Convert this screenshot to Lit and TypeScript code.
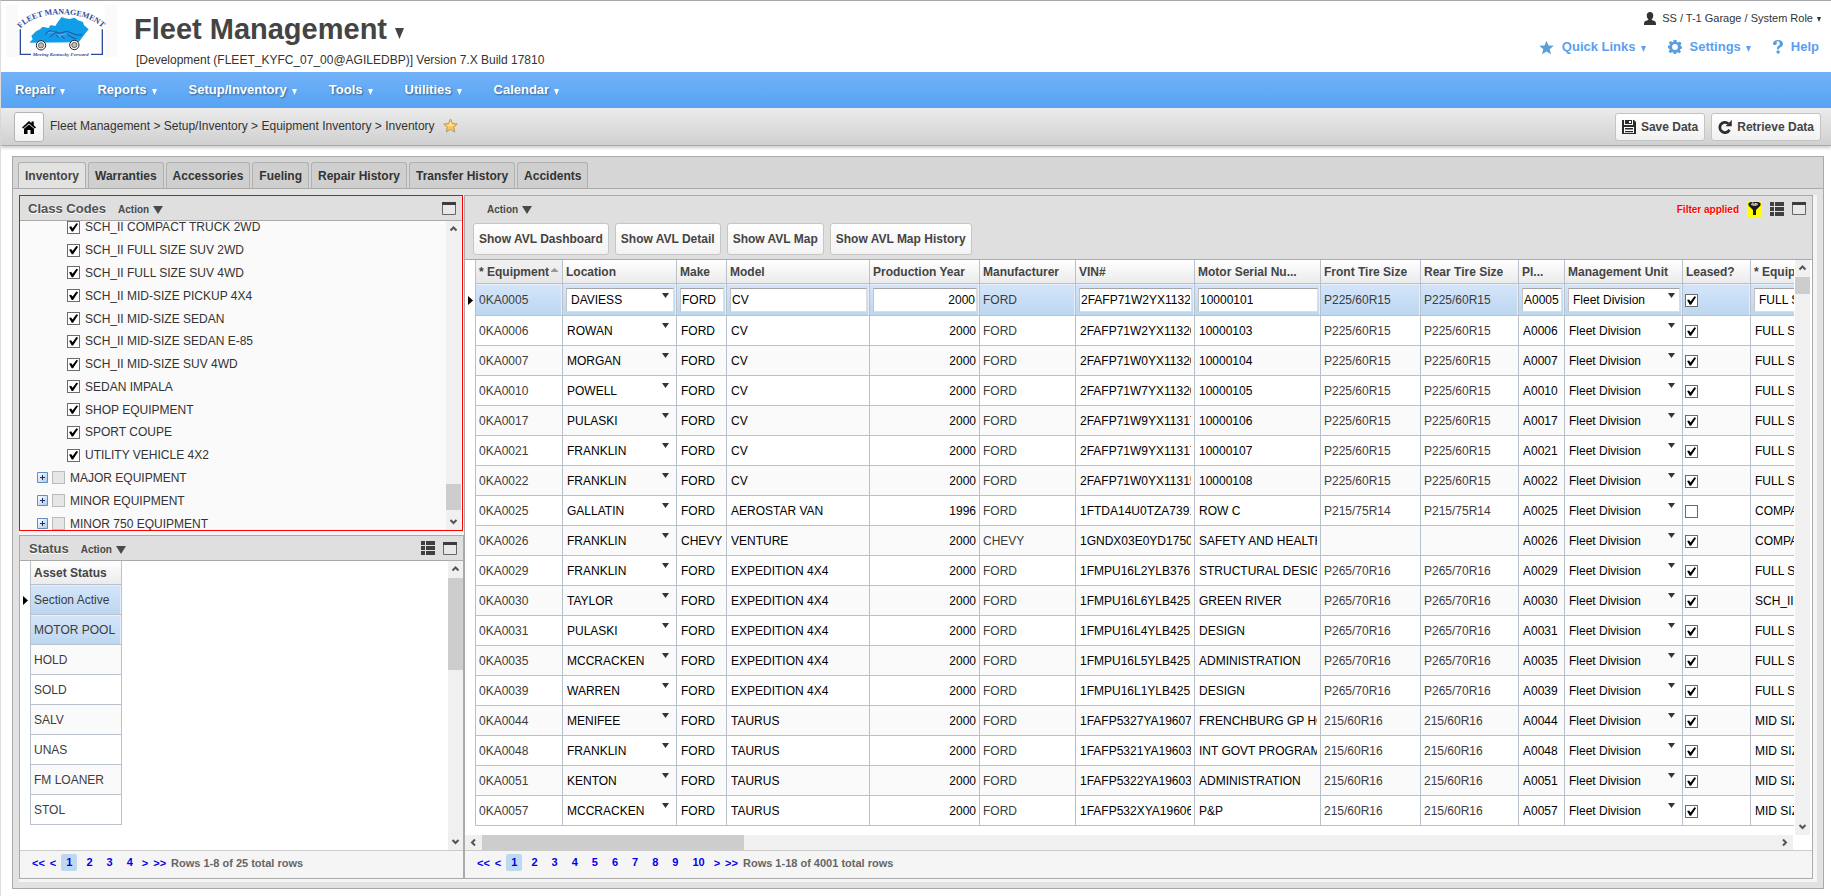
import { LitElement, html, css, svg, nothing, TemplateResult } from 'lit';
import { customElement, property } from 'lit/decorators.js';
import { classMap } from 'lit/directives/class-map.js';

const shared = css`
  * {
    box-sizing: border-box;
  }
  a {
    color: inherit;
    text-decoration: none;
  }
  button {
    font: inherit;
    color: inherit;
    margin: 0;
    cursor: pointer;
  }
  svg {
    display: block;
    flex: none;
  }
  input[type='checkbox'] {
    appearance: none;
    display: block;
    flex: none;
    width: 13px;
    height: 13px;
    margin: 0;
    border: 1px solid #6b6b6b;
    background: #fff;
  }
  input[type='checkbox']:checked::before {
    content: '';
    display: block;
    width: 11px;
    height: 11px;
    background: #000;
    clip-path: polygon(10% 46%, 28% 40%, 42% 58%, 76% 12%, 92% 18%, 46% 88%, 34% 88%);
  }
  input[type='checkbox']:disabled {
    border-color: #bbb;
    background: #e6e6e6;
  }
`;

const caret = (w: number, h: number) => svg`<svg width=${w} height=${h} viewBox="0 0 10 8" preserveAspectRatio="none" aria-hidden="true"><path d="M0 0H10L5 8Z" fill="currentColor"/></svg>`;

const icons = {
  star: html`<svg width="15" height="15" viewBox="0 0 24 24"><path fill="#5a9fdc" d="M12 1l3.2 7.8 8.3.5-6.4 5.4 2.1 8.2-7.2-4.5-7.2 4.5 2.1-8.2L.5 9.300l8.300-.5z"/></svg>`,
  gear: html`<svg width="14" height="14" viewBox="0 0 24 24"><path fill="#5a9fdc" fill-rule="evenodd" d="M9.600 0h4.800l.7 3.500 2 .9L20.100 2.400l3.300 3.300-2 3 .8 2L24 11v3.500l-2.600.8-.9 2 1.700 2.800-2.800 2.700-3-1.800-1.800.8-.8 2.200H9.800L9 21.400l-2-.8-3 2-2.900-2.900 1.900-3-.8-1.900L0 14V10l2.600-.5.9-2-2-3.100L4.400 1.700l3 2 1.700-.8zM12 7a5 5 0 100 10 5 5 0 000-10z"/></svg>`,
  help: html`<svg width="10" height="14" viewBox="0 0 20 28"><path fill="#5a9fdc" d="M0 7C.4 2.500 4.300 0 9.800 0 16 0 20 3 20 7.500c0 3.500-2 5.500-5 7-2.200 1.100-2.600 1.900-2.600 4H8c-.2-3.800.6-5.300 3-7 1.600-1.200 2.400-2.200 2.400-4.200 0-3-1.500-4.800-4-4.800-1.500 0-2.400.6-2.400 1.500 0 1 .8 1.400.8 2.900C7.800 8.600 6.200 10 4 10 1.600 10-.1 8.800 0 7zM10.200 20.500a3.500 3.500 0 110 7 3.500 3.500 0 010-7z"/></svg>`,
  user: html`<svg width="12" height="13" viewBox="0 0 24 26"><path fill="#333" d="M12 0c4 0 6.500 2.800 6.500 7 0 3-1.200 6-3 7.500v1.500l5.500 2c2.200.8 3 2.500 3 8H0c0-5.500.8-7.200 3-8l5.500-2v-1.500C6.700 13 5.500 10 5.500 7 5.500 2.800 8 0 12 0z"/></svg>`,
  home: html`<svg width="14" height="14" viewBox="0 0 28 28"><path fill="#000" d="M14 2l5 4.500V3h4.500v7.500L28 15l-2.500 2L14 7 2.500 17 0 15z"/><path fill="#000" d="M4 17.500L14 9l10 8.500V28h-7v-8h-6v8H4z"/></svg>`,
  favorite: html`<svg width="15" height="15" viewBox="0 0 30 30"><path fill="#fcc453" stroke="#b89a62" stroke-width="2" stroke-linejoin="round" d="M15 2l4 9 9.500 1-7 6.500 2 9.500-8.500-5-8.500 5 2-9.500-7-6.500 9.500-1z"/><path fill="#ffe29a" d="M15 6l2.800 7 6 .8-10 3.200-6-3.500 4.500-.5z"/></svg>`,
  save: html`<svg width="14" height="14" viewBox="0 0 14 14"><path fill="#2c2c2c" d="M0 0h2v5h9V0h1l2 2v12H0z"/><path fill="#2c2c2c" d="M3 0h7v4H3z"/><path fill="#fff" d="M7 1h2v2H7zM2 7h10v6H2z"/><path fill="#2c2c2c" d="M3 8h8v1.500H3zM3 11h8v1.300H3z"/></svg>`,
  refresh: html`<svg width="14" height="14" viewBox="0 0 28 28"><path fill="none" stroke="#2c2c2c" stroke-width="5.500" d="M23 19.500A10.200 10.200 0 1 1 20.500 7"/><path fill="#2c2c2c" d="M27.500 0v12.500H15z"/></svg>`,
  filter: html`<svg width="15" height="16" viewBox="0 0 30 32"><path fill="#ff0" d="M0 0h30v32H0z"/><path fill="#1a1a1a" d="M3 4l5-2h14l5 2v5l-9 9v10h-6V18L3 9z"/><path fill="#aaa" d="M8 5h14v3l-5 2h-4L8 8z"/><path fill="#eee" d="M10 3h3v2h-3zM16 4h3v2h-3z"/></svg>`,
  list: html`<svg width="14" height="14" viewBox="0 0 14 14"><path fill="#3f3f3f" d="M0 0h4v4H0zM5 0h9v4H5zM0 5h4v4H0zM5 5h9v4H5zM0 10h4v4H0zM5 10h9v4H5z"/></svg>`,
  window: html`<svg width="14" height="13" viewBox="0 0 14 13"><path fill="#e8e8e8" stroke="#666" d="M.5 .5h13v12H.5z"/><path fill="#3c3c3c" d="M0 0h14v3H0z"/></svg>`,
  marker: html`<svg width="5" height="9" viewBox="0 0 5 9"><path d="M0 0L5 4.500 0 9z"/></svg>`,
  sort: html`<svg width="7" height="4" viewBox="0 0 7 4"><path fill="#999" d="M3.500 0L7 3v1H0V3z"/></svg>`,
  plus: html`<svg width="11" height="11" viewBox="0 0 11 11"><defs><linearGradient id="pg" x1="0" y1="0" x2="1" y2="1"><stop offset="0" stop-color="#fff"/><stop offset="1" stop-color="#a9c9e8"/></linearGradient></defs><path fill="url(#pg)" stroke="#5e8fc4" d="M.5 .5h10v10H.5z"/><path stroke="#1c2f66" d="M3 5.500h5M5.500 3v5"/></svg>`,
};

const chevrons: Record<string, string> = {
  up: 'M1.500 5.500L4.500 2.500 7.500 5.500',
  down: 'M1.500 3L4.500 6 7.500 3',
  left: 'M6 1.500L3 4.500 6 7.500',
  right: 'M3 1.500L6 4.500 3 7.500',
};
const chevron = (dir: string) => html`<svg width="9" height="9" viewBox="0 0 9 9"><path d=${chevrons[dir]} fill="none" stroke="#555" stroke-width="2"/></svg>`;

@customElement('scroll-track')
class ScrollTrack extends LitElement {
  @property({ reflect: true }) axis = 'y';
  /** Share of the track before, under and after the thumb. */
  @property({ attribute: false }) parts = [0, 1, 1];

  static styles = [
    shared,
    css`
      :host {
        display: flex;
        flex: none;
        background: #f0f0f0;
      }
      :host([axis='y']) {
        flex-direction: column;
        width: 15px;
      }
      :host([axis='x']) {
        height: 15px;
      }
      .end {
        display: grid;
        place-items: center;
        width: 17px;
        height: 17px;
        padding: 0;
        border: 0;
        background: none;
      }
      :host([axis='y']) .end {
        width: 15px;
      }
      :host([axis='x']) .end {
        height: 15px;
      }
      .thumb {
        background: #cdcdcd;
      }
    `,
  ];

  render() {
    const vertical = this.axis === 'y';
    const [before, size, after] = this.parts;
    return html`
      <button class="end" aria-label=${vertical ? 'Scroll up' : 'Scroll left'}>${chevron(vertical ? 'up' : 'left')}</button>
      <div style="flex:${before}"></div>
      <div class="thumb" style="flex:${size}"></div>
      <div style="flex:${after}"></div>
      <button class="end" aria-label=${vertical ? 'Scroll down' : 'Scroll right'}>${chevron(vertical ? 'down' : 'right')}</button>
    `;
  }
}

@customElement('page-links')
class PageLinks extends LitElement {
  @property({ type: Number }) pages = 1;
  @property() summary = '';

  static styles = [
    shared,
    css`
      :host {
        display: block;
        height: 28px;
        padding: 3px 12px 0;
        border-top: 1px solid #ccc;
        background: #f5f5f5;
        font-weight: bold;
        font-size: 11px;
        color: #666;
      }
      nav {
        display: flex;
        align-items: center;
        gap: 4px;
        color: #00e;
      }
      .jump {
        padding-right: 1px;
      }
      .page {
        padding: 0 5px;
        border-radius: 2px;
        line-height: 17px;
      }
      .current {
        background: #bdd8f1;
      }
      .summary {
        color: #666;
      }
    `,
  ];

  render() {
    return html`<nav aria-label="Pages">
      <a class="jump" href="#">&lt;&lt;</a>
      <a class="jump" href="#">&lt;</a>
      ${Array.from({ length: this.pages }, (_, i) => html`<a href="#" class=${classMap({ page: true, current: i === 0 })}>${i + 1}</a>`)}
      <a class="jump" href="#">&gt;</a>
      <a class="jump" href="#">&gt;&gt;</a>
      <span class="summary">${this.summary}</span>
    </nav>`;
  }
}

const panelStyles = css`
  .panel-head {
    display: flex;
    align-items: center;
    gap: 12px;
    height: 25px;
    padding: 0 6px 0 9px;
    border-bottom: 1px solid #aaa;
    background: #dfdfdf;
    color: #4a4a4a;
    text-shadow: 0 1px 0 #fff;
  }
  h2 {
    margin: 0;
    padding-top: 2px;
    font-size: 13px;
    font-weight: bold;
    color: #505050;
  }
  .action {
    display: flex;
    align-items: center;
    gap: 4px;
    padding: 3px 0 0;
    border: 0;
    background: none;
    font-size: 10px;
    font-weight: bold;
  }
  .tools {
    display: flex;
    align-items: center;
    gap: 8px;
    margin-left: auto;
  }
  .icon {
    padding: 0;
    border: 0;
    background: none;
  }
`;

const gridStyles = css`
  table {
    border-spacing: 0;
    table-layout: fixed;
  }
  th,
  td {
    height: 30px;
    padding: 0 2px 0 3px;
    border: 0 solid #b9c2cc;
    border-width: 0 1px 1px 0;
    text-align: left;
    white-space: nowrap;
    overflow: hidden;
    color: #3c3c3c;
    font-weight: normal;
  }
  thead th,
  thead td {
    height: 24px;
    background: linear-gradient(#fff, #ebebeb);
    font-weight: bold;
    color: #444;
    text-overflow: ellipsis;
  }
  tbody tr:nth-child(odd) td {
    background: #fafafa;
  }
  tbody tr.selected td {
    background: linear-gradient(#d5e5fa, #bcd7f0);
    box-shadow: inset -1px 1px 0 #e6effa;
  }
  thead td.mark,
  tbody tr td.mark.mark {
    padding: 0 2px 0 3px;
    border-bottom: 0;
    background: none;
    box-shadow: none;
    overflow: visible;
  }
`;

const codes = [
  'SCH_II COMPACT TRUCK 2WD',
  'SCH_II FULL SIZE SUV 2WD',
  'SCH_II FULL SIZE SUV 4WD',
  'SCH_II MID-SIZE PICKUP 4X4',
  'SCH_II MID-SIZE SEDAN',
  'SCH_II MID-SIZE SEDAN E-85',
  'SCH_II MID-SIZE SUV 4WD',
  'SEDAN IMPALA',
  'SHOP EQUIPMENT',
  'SPORT COUPE',
  'UTILITY VEHICLE 4X2',
];
const groups = ['MAJOR EQUIPMENT', 'MINOR EQUIPMENT', 'MINOR 750 EQUIPMENT'];

@customElement('class-codes')
class ClassCodes extends LitElement {
  static styles = [
    shared,
    panelStyles,
    css`
      :host {
        display: flex;
        flex-direction: column;
        border: 1px solid #f00;
        background: #fafafa;
      }
      .panel-head {
        padding-left: 8px;
      }
      .body {
        display: flex;
        flex: 1;
        min-height: 0;
        padding-right: 1px;
        overflow: hidden;
      }
      ul {
        display: flex;
        flex: 1;
        flex-direction: column;
        margin: -5px 0;
        padding: 0;
        list-style: none;
      }
      li {
        display: flex;
        flex: 1;
        align-items: center;
        padding-left: 47px;
      }
      li.group {
        gap: 4px;
        padding-left: 17px;
      }
      label {
        display: flex;
        align-items: center;
        gap: 5px;
        color: #333;
      }
    `,
  ];

  render() {
    return html`
      <div class="panel-head">
        <h2>Class Codes</h2>
        <button class="action">Action ${caret(10, 8)}</button>
        <div class="tools"><button class="icon" aria-label="Maximize">${icons.window}</button></div>
      </div>
      <div class="body">
        <ul>
          ${codes.map((c) => html`<li><label><input type="checkbox" checked />${c}</label></li>`)}
          ${groups.map(
            (g) => html`<li class="group">
              <button class="icon" aria-label="Expand">${icons.plus}</button>
              <label><input type="checkbox" disabled />${g}</label>
            </li>`
          )}
        </ul>
        <scroll-track .parts=${[247, 26, 3]}></scroll-track>
      </div>
    `;
  }
}

const statuses = ['Section Active', 'MOTOR POOL', 'HOLD', 'SOLD', 'SALV', 'UNAS', 'FM LOANER', 'STOL'];

@customElement('status-panel')
class StatusPanel extends LitElement {
  static styles = [
    shared,
    panelStyles,
    gridStyles,
    css`
      :host {
        display: block;
        border: 1px solid #aaa;
        background: #fff;
      }
      .body {
        display: flex;
        justify-content: space-between;
      }
      table {
        width: 102px;
        margin-bottom: 25px;
      }
      .mark {
        width: 11px;
      }
    `,
  ];

  render() {
    return html`
      <div class="panel-head">
        <h2>Status</h2>
        <button class="action">Action ${caret(10, 8)}</button>
        <div class="tools">
          <button class="icon" aria-label="Columns">${icons.list}</button>
          <button class="icon" aria-label="Maximize">${icons.window}</button>
        </div>
      </div>
      <div class="body">
        <table>
          <thead>
            <tr><td class="mark"></td><th scope="col">Asset Status</th></tr>
          </thead>
          <tbody>
            ${statuses.map(
              (s, i) => html`<tr class=${i < 2 ? 'selected' : ''}>
                <td class="mark">${i === 0 ? icons.marker : nothing}</td>
                <td>${s}</td>
              </tr>`
            )}
          </tbody>
        </table>
        <scroll-track .parts=${[0, 92, 163]}></scroll-track>
      </div>
      <page-links pages="4" summary="Rows 1-8 of 25 total rows"></page-links>
    `;
  }
}

interface Vehicle {
  id: string;
  location: string;
  make: string;
  model: string;
  year: string;
  vin: string;
  serial: string;
  tire: string;
  leased: boolean;
  kind: string;
}

const vehicles: Vehicle[] = [
  ['0005', 'DAVIESS', 'FORD', 'CV', '2000', '2FAFP71W2YX113201', '10000101', 'P225/60R15', 'FULL SIZE SEDAN'],
  ['0006', 'ROWAN', 'FORD', 'CV', '2000', '2FAFP71W2YX113202', '10000103', 'P225/60R15', 'FULL SIZE SEDAN'],
  ['0007', 'MORGAN', 'FORD', 'CV', '2000', '2FAFP71W0YX113203', '10000104', 'P225/60R15', 'FULL SIZE SEDAN'],
  ['0010', 'POWELL', 'FORD', 'CV', '2000', '2FAFP71W7YX113204', '10000105', 'P225/60R15', 'FULL SIZE SEDAN'],
  ['0017', 'PULASKI', 'FORD', 'CV', '2000', '2FAFP71W9YX113171', '10000106', 'P225/60R15', 'FULL SIZE SEDAN'],
  ['0021', 'FRANKLIN', 'FORD', 'CV', '2000', '2FAFP71W9YX113171', '10000107', 'P225/60R15', 'FULL SIZE SEDAN'],
  ['0022', 'FRANKLIN', 'FORD', 'CV', '2000', '2FAFP71W0YX113151', '10000108', 'P225/60R15', 'FULL SIZE SEDAN'],
  ['0025', 'GALLATIN', 'FORD', 'AEROSTAR VAN', '1996', '1FTDA14U0TZA73911', 'ROW C', 'P215/75R14', 'COMPACT VAN'],
  ['0026', 'FRANKLIN', 'CHEVY', 'VENTURE', '2000', '1GNDX03E0YD175011', 'SAFETY AND HEALTH', '', 'COMPACT VAN'],
  ['0029', 'FRANKLIN', 'FORD', 'EXPEDITION 4X4', '2000', '1FMPU16L2YLB37611', 'STRUCTURAL DESIGN', 'P265/70R16', 'FULL SIZE SUV'],
  ['0030', 'TAYLOR', 'FORD', 'EXPEDITION 4X4', '2000', '1FMPU16L6YLB42511', 'GREEN RIVER', 'P265/70R16', 'SCH_II FULL SIZE'],
  ['0031', 'PULASKI', 'FORD', 'EXPEDITION 4X4', '2000', '1FMPU16L4YLB42511', 'DESIGN', 'P265/70R16', 'FULL SIZE SUV'],
  ['0035', 'MCCRACKEN', 'FORD', 'EXPEDITION 4X4', '2000', '1FMPU16L5YLB42511', 'ADMINISTRATION', 'P265/70R16', 'FULL SIZE SUV'],
  ['0039', 'WARREN', 'FORD', 'EXPEDITION 4X4', '2000', '1FMPU16L1YLB42511', 'DESIGN', 'P265/70R16', 'FULL SIZE SUV'],
  ['0044', 'MENIFEE', 'FORD', 'TAURUS', '2000', '1FAFP5327YA196071', 'FRENCHBURG GP HQ', '215/60R16', 'MID SIZE SEDAN'],
  ['0048', 'FRANKLIN', 'FORD', 'TAURUS', '2000', '1FAFP5321YA196031', 'INT GOVT PROGRAMS', '215/60R16', 'MID SIZE SEDAN'],
  ['0051', 'KENTON', 'FORD', 'TAURUS', '2000', '1FAFP5322YA196031', 'ADMINISTRATION', '215/60R16', 'MID SIZE SEDAN'],
  ['0057', 'MCCRACKEN', 'FORD', 'TAURUS', '2000', '1FAFP532XYA196061', 'P&P', '215/60R16', 'MID SIZE SEDAN'],
].map(([id, location, make, model, year, vin, serial, tire, kind]) => ({
  id, location, make, model, year, vin, serial, tire, kind, leased: id !== '0025',
}));

const columns: [string, number][] = [
  ['* Equipment', 87],
  ['Location', 114],
  ['Make', 50],
  ['Model', 143],
  ['Production Year', 110],
  ['Manufacturer', 96],
  ['VIN#', 119],
  ['Motor Serial Nu...', 126],
  ['Front Tire Size', 100],
  ['Rear Tire Size', 98],
  ['Pl...', 46],
  ['Management Unit', 118],
  ['Leased?', 68],
  ['* Equipment Type', 150],
];

@customElement('inventory-grid')
class InventoryGrid extends LitElement {
  static styles = [
    shared,
    panelStyles,
    gridStyles,
    css`
      :host {
        display: flex;
        flex-direction: column;
        min-width: 0;
        border: 1px solid #aaa;
        background: #fff;
      }
      .top {
        border-bottom: 1px solid #aaa;
        background: #dfdfdf;
      }
      .top .panel-head {
        height: 27px;
        padding: 0 6px 2px 22px;
        border: 0;
      }
      .warn {
        padding-top: 3px;
        color: #f00;
        font-size: 10px;
        font-weight: bold;
      }
      .buttons {
        display: flex;
        gap: 6px;
        padding: 0 8px 4px;
      }
      .buttons button {
        height: 32px;
        padding: 0 5px;
        border: 1px solid #c6c6c6;
        border-radius: 3px;
        background: linear-gradient(#fff, #f3f3f3);
        font-weight: bold;
        color: #444;
      }
      .body {
        display: grid;
        flex: 1;
        grid-template: 1fr auto / minmax(0, 1fr) auto;
      }
      .view {
        overflow: hidden;
        padding-bottom: 8px;
      }
      .across {
        margin-right: 1px;
      }
      .down {
        margin-right: 2px;
        margin-left: 1px;
      }
      table {
        width: 1436px;
      }
      .sorted {
        background: linear-gradient(#f2f2f2, #e6e6e6);
      }
      .sorted span {
        display: flex;
        justify-content: space-between;
        padding-right: 2px;
      }
      .sorted svg {
        margin-top: 3px;
      }
      .box,
      .pick select {
        display: block;
        width: 100%;
        height: 24px;
        margin: 0;
        padding: 0;
        border: 1px solid transparent;
        border-radius: 0;
        outline: 0;
        background: none;
        font: inherit;
        color: #000;
      }
      .right {
        text-align: right;
      }
      .pick {
        display: grid;
        grid-template-columns: minmax(0, 1fr) 12px;
      }
      .pick select {
        grid-area: 1 / 1 / 2 / 3;
        appearance: none;
        text-overflow: clip;
      }
      .pick svg {
        grid-area: 1 / 2;
        margin-top: 4px;
        color: #333;
        pointer-events: none;
      }
      tr.selected td {
        height: 32px;
      }
      tr.selected .box,
      tr.selected select {
        background: #fff;
        border-color: #a4a4a4 #ddd #ddd #c4c4c4;
      }
      tr.selected .box {
        padding: 0 1px;
      }
      tr.selected select {
        padding-left: 4px;
      }
      tr.selected .pick svg {
        margin-top: 5px;
      }
      .check {
        padding: 2px 2px 0;
      }
    `,
  ];

  private text(value: string, label: string, right = false) {
    return html`<td><input class=${classMap({ box: true, right })} type="text" .value=${value} aria-label=${label} /></td>`;
  }

  private pick(value: string, label: string) {
    return html`<td><div class="pick"><select aria-label=${label}><option>${value}</option></select>${caret(7, 5)}</div></td>`;
  }

  private row(v: Vehicle, i: number): TemplateResult {
    return html`<tr class=${i === 0 ? 'selected' : ''}>
      <td class="mark">${i === 0 ? icons.marker : nothing}</td>
      <td>0KA${v.id}</td>
      ${this.pick(v.location, 'Location')} ${this.text(v.make, 'Make')} ${this.text(v.model, 'Model')}
      ${this.text(v.year, 'Production Year', true)}
      <td>${v.make}</td>
      ${this.text(v.vin, 'VIN')} ${this.text(v.serial, 'Motor Serial Number')}
      <td>${v.tire}</td>
      <td>${v.tire}</td>
      ${this.text('A' + v.id, 'Plate')} ${this.pick('Fleet Division', 'Management Unit')}
      <td class="check"><input type="checkbox" .checked=${v.leased} aria-label="Leased" /></td>
      ${this.pick(v.kind, 'Equipment Type')}
    </tr>`;
  }

  render() {
    return html`
      <div class="top">
        <div class="panel-head">
          <button class="action">Action ${caret(10, 8)}</button>
          <div class="tools">
            <span class="warn">Filter applied</span>
            <button class="icon" aria-label="Filter">${icons.filter}</button>
            <button class="icon" aria-label="Columns">${icons.list}</button>
            <button class="icon" aria-label="Maximize">${icons.window}</button>
          </div>
        </div>
        <div class="buttons">
          ${['Dashboard', 'Detail', 'Map', 'Map History'].map((t) => html`<button>Show AVL ${t}</button>`)}
        </div>
      </div>
      <div class="body">
        <div class="view">
          <table>
            <colgroup>
              <col style="width:11px" />
              ${columns.map(([, w]) => html`<col style="width:${w}px" />`)}
            </colgroup>
            <thead>
              <tr>
                <td class="mark"></td>
                ${columns.map(([t], i) =>
                  i === 0 ? html`<th class="sorted" scope="col"><span>${t} ${icons.sort}</span></th>` : html`<th scope="col">${t}</th>`
                )}
              </tr>
            </thead>
            <tbody>
              ${vehicles.map((v, i) => this.row(v, i))}
            </tbody>
          </table>
        </div>
        <scroll-track class="down" .parts=${[0, 17, 522]}></scroll-track>
        <scroll-track class="across" axis="x" .parts=${[0, 262, 1033]}></scroll-track>
      </div>
      <page-links pages="10" summary="Rows 1-18 of 4001 total rows"></page-links>
    `;
  }
}

const logo = html`<svg width="111" height="52" viewBox="18 15 333 156" role="img" aria-label="Fleet Management, Moving Kentucky Forward">
  <path fill="#fafafa" d="M18 15h333v156H18z" />
  <path fill="#fff" d="M54 15h260v156H54z" />
  <path fill="none" stroke="#2c4a9e" stroke-width="4" d="M61 88V163H93M273 163H307V88" />
  <path fill="#119de8" d="M88 128l10-10-4-10 14-14 12-6 8-8 18 4 6-9 14 3 8-13 11-14 10 4 14 2 14-4 11 8 15 5 3 10 14 12-9 11-11 14-10 14z" />
  <path fill="none" stroke="#2c4a9e" stroke-width="3" d="M136 104c6-12 16-14 26-8 10 5 20 4 30 0s20 2 30 6 16 4 24 2M150 112l14-14 12 16M166 92l8 8M182 106l12 10M200 100c8 8 16 14 28 16" />
  <path fill="none" stroke="#cde6f8" d="M144 100c10-6 18-4 26 2s24 2 32-2M176 112l8-8" />
  <circle cx="123" cy="136" r="14" fill="#fff" stroke="#222" stroke-width="3" />
  <circle cx="123" cy="136" r="8" fill="#bbb" stroke="#333" stroke-width="2" />
  <circle cx="223" cy="135" r="14" fill="#fff" stroke="#222" stroke-width="3" />
  <circle cx="223" cy="135" r="8" fill="#bbb" stroke="#333" stroke-width="2" />
  <path id="arch" fill="none" d="M62 86C106 28 258 28 308 86" />
  <text font-family="Liberation Serif, serif" font-weight="bold" font-size="24" fill="#2c4a9e"><textPath href="#arch">FLEET MANAGEMENT</textPath></text>
  <text x="98" y="167" font-family="Liberation Serif, serif" font-style="italic" font-weight="bold" font-size="15" fill="#2c4a9e">Moving Kentucky Forward</text>
</svg>`;

@customElement('app-root')
class AppRoot extends LitElement {
  static styles = [
    shared,
    css`
      :host {
        display: flex;
        flex-direction: column;
        box-sizing: border-box;
        min-height: 100vh;
        border-top: 1px solid #aaa;
        border-left: 1px solid #ddd;
        background: #fff;
        font-family: 'Liberation Sans', Arial, sans-serif;
        font-size: 12px;
        line-height: 14px;
        color: #333;
      }
      header {
        display: flex;
        height: 71px;
        padding: 4px 10px 0 5px;
      }
      .name {
        padding: 7px 0 0 17px;
        flex: 1;
      }
      h1 {
        display: flex;
        align-items: center;
        gap: 8px;
        margin: 0;
        font-size: 29px;
        line-height: 34px;
        color: #444;
      }
      h1 svg {
        margin-top: 8px;
      }
      .version {
        margin: 7px 0 0 2px;
      }
      .account {
        display: flex;
        flex-direction: column;
        align-items: flex-end;
        gap: 14px;
        padding-top: 6px;
      }
      .who {
        display: flex;
        align-items: center;
        gap: 4px;
        font-size: 11px;
      }
      .who svg:first-child {
        margin-right: 2px;
      }
      .who svg:last-child {
        margin-top: 3px;
      }
      .links {
        display: flex;
        gap: 22px;
        padding-right: 2px;
        font-size: 13px;
        line-height: 16px;
        font-weight: bold;
        color: #5ba0ef;
      }
      .links a {
        display: flex;
        align-items: center;
        gap: 5px;
      }
      .links svg:first-child {
        margin-right: 3px;
      }
      .links svg:last-child {
        margin-top: 3px;
      }
      .main-nav {
        display: flex;
        gap: 32px;
        height: 36px;
        padding: 0 14px;
        align-items: center;
        background: linear-gradient(#73b2f8, #55a3f2);
        color: #fff;
        font-size: 13px;
        font-weight: bold;
        text-shadow: 1px 1px 2px #35618f;
      }
      .main-nav a {
        display: flex;
        align-items: center;
        gap: 5px;
      }
      .main-nav svg {
        margin-top: 3px;
      }
      .toolbar {
        display: flex;
        align-items: center;
        gap: 6px;
        height: 38px;
        padding: 0 10px 0 13px;
        border-bottom: 1px solid #aaa;
        background: linear-gradient(#ebebeb, #d0d0d0);
        box-shadow: 0 2px 3px #ccc;
      }
      .toolbar button {
        display: flex;
        align-items: center;
        gap: 5px;
        height: 28px;
        padding: 0 6px;
        border: 1px solid #c4c4c4;
        border-radius: 3px;
        background: linear-gradient(#fff, #f1f1f1);
        font-weight: bold;
        color: #444;
      }
      .toolbar .home {
        height: 30px;
        padding: 0 7px;
        border-color: #b4b4b4;
      }
      .crumbs {
        display: flex;
        flex: 1;
        align-items: center;
        gap: 8px;
        padding-bottom: 2px;
      }
      main {
        display: flex;
        flex: 1;
        flex-direction: column;
        margin: 10px 7px 7px 11px;
        border: 1px solid #aaa;
        background: #e2e2e0;
      }
      .tabs {
        display: flex;
        gap: 2px;
        padding: 5px 5px 0;
        border-bottom: 1px solid #aaa;
        background: #d6d6d6;
      }
      .tabs button {
        height: 26px;
        padding: 0 6px;
        border: 1px solid #b0b0b0;
        border-bottom: 0;
        border-radius: 3px 3px 0 0;
        background: #cfcfcf;
        font-weight: bold;
        color: #333;
      }
      .tabs .active {
        background: #e2e2e0;
        color: #444;
      }
      .work {
        display: grid;
        flex: 1;
        grid-template-columns: 445px minmax(0, 1fr);
        margin: 6px;
        padding: 0 4px 3px 0;
        background: #f5f5f5;
      }
      .side {
        display: flex;
        flex-direction: column;
        gap: 4px;
      }
      .side class-codes {
        flex: 1;
        margin-right: 1px;
      }
    `,
  ];

  render() {
    return html`
      <header>
        ${logo}
        <div class="name">
          <h1>Fleet Management ${caret(9, 11)}</h1>
          <p class="version">[Development (FLEET_KYFC_07_00@AGILEDBP)] Version 7.X Build 17810</p>
        </div>
        <div class="account">
          <a class="who" href="#">${icons.user} SS / T-1 Garage / System Role ${caret(4, 5)}</a>
          <div class="links">
            <a href="#">${icons.star} Quick Links ${caret(5, 6)}</a>
            <a href="#">${icons.gear} Settings ${caret(5, 6)}</a>
            <a href="#">${icons.help} <span>Help</span></a>
          </div>
        </div>
      </header>
      <nav class="main-nav" aria-label="Main">
        ${['Repair', 'Reports', 'Setup/Inventory', 'Tools', 'Utilities', 'Calendar'].map((t) => html`<a href="#">${t} ${caret(5, 6)}</a>`)}
      </nav>
      <div class="toolbar">
        <button class="home" aria-label="Home">${icons.home}</button>
        <div class="crumbs">Fleet Management &gt; Setup/Inventory &gt; Equipment Inventory &gt; Inventory ${icons.favorite}</div>
        <button>${icons.save} Save Data</button>
        <button>${icons.refresh} Retrieve Data</button>
      </div>
      <main>
        <div class="tabs" role="tablist">
          ${['Inventory', 'Warranties', 'Accessories', 'Fueling', 'Repair History', 'Transfer History', 'Accidents'].map(
            (t, i) => html`<button role="tab" aria-selected=${i === 0} class=${i === 0 ? 'active' : ''}>${t}</button>`
          )}
        </div>
        <div class="work">
          <div class="side">
            <class-codes></class-codes>
            <status-panel></status-panel>
          </div>
          <inventory-grid></inventory-grid>
        </div>
      </main>
    `;
  }
}
